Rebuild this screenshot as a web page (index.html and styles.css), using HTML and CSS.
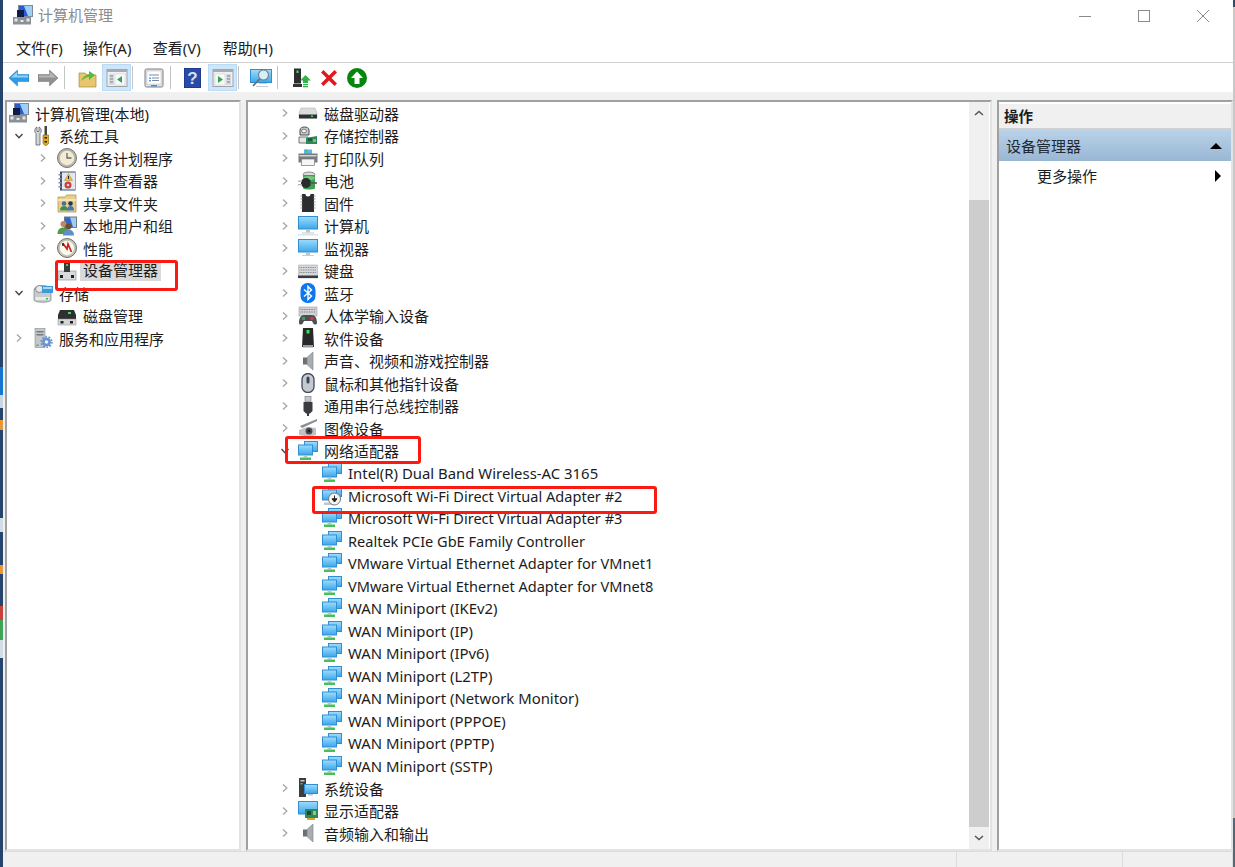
FILE: index.html
```html
<!DOCTYPE html>
<html lang="zh-CN">
<head>
<meta charset="utf-8">
<title>计算机管理</title>
<link rel="stylesheet" href="styles.css">
</head>
<body>
<svg class="defs" width="0" height="0" aria-hidden="true">
  <defs>
    <linearGradient id="scr" x1="0" y1="0" x2="0" y2="1"><stop offset="0" stop-color="#9adafc"/><stop offset="1" stop-color="#3fa9ea"/></linearGradient>
    <symbol id="chev-r" viewBox="0 0 10 10"><path d="M3 1.5 6.8 5 3 8.5" fill="none" stroke="#a6a6a6" stroke-width="1.3"/></symbol>
    <symbol id="chev-d" viewBox="0 0 10 10"><path d="M1.5 3 5 6.8 8.5 3" fill="none" stroke="#404040" stroke-width="1.3"/></symbol>

    <symbol id="i-mgmt" viewBox="0 0 20 20"><rect x="0" y="12" width="18" height="7.500" fill="#8b9097"/><rect x="1.500" y="13.500" width="3" height="3" fill="#e8e8e8"/><rect x="7.500" y="15" width="3" height="2" fill="#e8e8e8"/><rect x="13.500" y="13.500" width="3" height="3" fill="#e8e8e8"/><rect x="5" y="0" width="15" height="12" fill="#7d8a9b"/><rect x="6" y="1" width="13" height="10" fill="#2b59d8"/><path d="M11 1h8v10h-4z" fill="#9ed0f5"/><rect x="4" y="5" width="7" height="7" fill="#111c44"/></symbol>
    <symbol id="i-tools" viewBox="0 0 20 20"><path d="M4 1C1.500 2 1 6 3 7.500V19h4V7.500C9 6 8.500 2 6 1v4.500H4z" fill="#d2d5d8" stroke="#5f6266" stroke-width=".8"/><rect x="11.500" y="0" width="2.500" height="9" fill="#444"/><path d="M10 9h5.500v8.500L12.800 20 10 17.500z" fill="#e7a81c" stroke="#7d5a08" stroke-width=".6"/><rect x="11.500" y="11" width="2.500" height="1.500" fill="#222"/><rect x="11.500" y="15" width="2.500" height="1.500" fill="#222"/></symbol>
    <symbol id="i-clock" viewBox="0 0 20 20"><circle cx="10" cy="10" r="9.500" fill="#b6b6ae" stroke="#777"/><circle cx="10" cy="10" r="7.200" fill="#f4ecd2"/><path d="M10 5v5h4.500" fill="none" stroke="#666" stroke-width="1.300"/></symbol>
    <symbol id="i-event" viewBox="0 0 20 20"><rect x="3" y="0.500" width="15.500" height="19" fill="#33547f"/><rect x="5" y="1.500" width="13" height="17" fill="#e4e8ee"/><rect x="1.500" y="3" width="3" height="1.500" fill="#889"/><rect x="1.500" y="7" width="3" height="1.500" fill="#889"/><rect x="1.500" y="11" width="3" height="1.500" fill="#889"/><rect x="1.500" y="15" width="3" height="1.500" fill="#889"/><path d="M11.500 2.500 15.500 9.500h-8z" fill="#f3c21c" stroke="#866" stroke-width=".4"/><rect x="11" y="5" width="1" height="3" fill="#222"/><circle cx="11" cy="14" r="3.500" fill="#c9403a"/><circle cx="11" cy="14" r="1.300" fill="#f2d0cc"/></symbol>
    <symbol id="i-share" viewBox="0 0 20 20"><path d="M1 4h7l1.500-2H19V19H1z" fill="#e9d08a" stroke="#b08d3c" stroke-width=".7"/><path d="M1 6h18v2H1z" fill="#f4e4b5"/><circle cx="7" cy="10.500" r="2.300" fill="#4c6a9c"/><path d="M3 17.500c0-3 1.500-4.500 4-4.500s4 1.500 4 4.500z" fill="#3f8b52"/><circle cx="13.500" cy="10.500" r="2.300" fill="#20355d"/><path d="M10 17.500c0-3 1-4.500 3.500-4.500s3.500 1.500 3.500 4.500z" fill="#4676b0"/></symbol>
    <symbol id="i-users" viewBox="0 0 20 20"><rect x="7" y="0.500" width="13" height="11.500" fill="#6d7b8d"/><path d="M8 1.500h11v9.500H8z" fill="#3566cc"/><path d="M13 1.500h6v9.500h-3z" fill="#9ecff1"/><circle cx="6.500" cy="8" r="3" fill="#b88a60"/><path d="M0.500 18c0-4 2-6.500 6-6.500S12 14 12 18z" fill="#4f9a4f"/><circle cx="11.500" cy="10.500" r="3" fill="#6f4d33"/><path d="M6 19.500c0-3.500 2-6 5.500-6s5.500 2.500 5.500 6z" fill="#5d8fca"/></symbol>
    <symbol id="i-perf" viewBox="0 0 20 20"><circle cx="10" cy="10" r="9.500" fill="#c5c2b6" stroke="#6f6f6a"/><circle cx="10" cy="10" r="7.200" fill="#fbf8ee"/><path d="M6 5.500 10 11l1-5 3.500 8" fill="none" stroke="#c8231c" stroke-width="1.700"/><path d="M6 5v3" stroke="#222" stroke-width="1.500"/></symbol>
    <symbol id="i-dev" viewBox="0 0 20 20"><rect x="1" y="10" width="18" height="9" fill="#d8dadc" stroke="#8a8d90" stroke-width=".6"/><rect x="3" y="14" width="3" height="3" fill="#222"/><rect x="14" y="14" width="3" height="3" fill="#222"/><rect x="7" y="1" width="6" height="10" fill="#37393c"/><rect x="9" y="3" width="2" height="2" fill="#46d34b"/></symbol>
    <symbol id="i-storage" viewBox="0 0 20 20"><path d="M1 7c0-6 17-6 17 0v10c0 3-17 3-17 0z" fill="#c7cbce" stroke="#7d8185" stroke-width=".7"/><ellipse cx="6.500" cy="6" rx="4" ry="3.500" fill="#e8e8e8" stroke="#6a6a6a" stroke-width=".7"/><rect x="9" y="3" width="11" height="7" fill="#3d9ad9"/><path d="M10 4h9v2h-9z" fill="#a4d8f7"/><rect x="2.500" y="14" width="14" height="3" fill="#eaeaea"/><rect x="13" y="15" width="2" height="1.500" fill="#39b54a"/></symbol>
    <symbol id="i-disk" viewBox="0 0 20 20"><path d="M3 4h14l2 5v4H1V9z" fill="#2e2f31"/><rect x="11" y="6" width="3" height="2" fill="#4dd55a"/><rect x="1" y="13" width="18" height="6" fill="#d3d5d7" stroke="#8a8d90" stroke-width=".5"/><rect x="3.500" y="15" width="3" height="2.500" fill="#222"/><rect x="13" y="15" width="3" height="2.500" fill="#222"/></symbol>
    <symbol id="i-svc" viewBox="0 0 20 20"><rect x="2" y="0.500" width="10" height="19" fill="#c4c8cc" stroke="#848a90" stroke-width=".6"/><rect x="3.500" y="3" width="7" height="1.500" fill="#74797e"/><rect x="3.500" y="6" width="7" height="1.500" fill="#74797e"/><rect x="3.500" y="16.500" width="2" height="1.500" fill="#39b54a"/><circle cx="13.500" cy="14" r="4.500" fill="#6b93cf"/><circle cx="13.500" cy="14" r="5.300" fill="none" stroke="#6b93cf" stroke-width="1.800" stroke-dasharray="1.700 1.600"/><circle cx="13.500" cy="14" r="1.800" fill="#eef3fa"/></symbol>
    <symbol id="i-hdd" viewBox="0 0 20 20"><path d="M3 5h14l2 5v5H1v-5z" fill="#dadcdd" stroke="#a7a9ab" stroke-width=".5"/><rect x="1" y="11.500" width="18" height="4" fill="#2f3133"/><rect x="13" y="12.500" width="2" height="1.500" fill="#4dd55a"/></symbol>
    <symbol id="i-stor" viewBox="0 0 20 20"><path d="M2 4c0-4 9-4 9 0v5H2z" fill="#c7cbce" stroke="#4a4d50"/><ellipse cx="6" cy="5" rx="2.500" ry="1.800" fill="#f3f3f3" stroke="#444" stroke-width=".6"/><path d="M1 11h9v6H1z" fill="#e6e6e6" stroke="#555" stroke-width=".8"/><path d="M8 12l11-2v8H8z" fill="#2a8a5b"/><rect x="10" y="12" width="4" height="3" fill="#1c5e3d"/><rect x="15" y="13" width="3" height="3" fill="#caa24b"/></symbol>
    <symbol id="i-print" viewBox="0 0 20 20"><rect x="6" y="1.500" width="8" height="5" fill="#5fb7ee"/><rect x="7" y="1.500" width="2" height="3" fill="#4cc45a"/><path d="M0.500 5.500h19v9h-3v-3h-13v3h-3z" fill="#777c80"/><path d="M1.500 7h17v1.500h-17z" fill="#d2d5d7"/><rect x="3.500" y="11" width="13" height="6.500" fill="#f6f6f6" stroke="#777" stroke-width=".7"/></symbol>
    <symbol id="i-batt" viewBox="0 0 20 20"><ellipse cx="11" cy="3.500" rx="6" ry="2.500" fill="#d8dcdc" stroke="#666" stroke-width=".7"/><path d="M5 4h12v13c0 2-12 2-12 0z" fill="#3aa24c"/><ellipse cx="11" cy="7" rx="6" ry="2" fill="#77c885"/><circle cx="8" cy="12" r="5" fill="#2a2c2e"/><rect x="0" y="9.500" width="4" height="1.300" fill="#b4b4b4"/><rect x="0" y="13" width="4" height="1.300" fill="#b4b4b4"/><path d="M12 12h7" stroke="#555" stroke-width="1.600"/></symbol>
    <symbol id="i-chip" viewBox="0 0 20 20"><path d="M4 1h3.500a2.500 2.500 0 0 0 5 0H16v18H4z" fill="#2c2d2f"/><path d="M2.500 3h2M2.500 6h2M2.500 9h2M2.500 12h2M2.500 15h2M15.500 3h2M15.500 6h2M15.500 9h2M15.500 12h2M15.500 15h2" stroke="#9a9a9a" stroke-width="1.100"/></symbol>
    <symbol id="i-computer" viewBox="0 0 20 20"><rect y="0" width="20" height="13.500" fill="#2f8fd6"/><rect x="1" y="1" width="18" height="11.500" fill="url(#scr)"/><rect x="8" y="14" width="4" height="2.500" fill="#bcc6cc"/><rect x="4" y="16.500" width="12" height="1" fill="#c5ced4"/><rect y="18" width="20" height="1.500" fill="#dde3e6"/></symbol>
    <symbol id="i-monitor" viewBox="0 0 20 20"><rect y="1" width="20" height="13.500" fill="#2f8fd6"/><rect x="1" y="2" width="18" height="11.500" fill="url(#scr)"/><rect x="8" y="15" width="4" height="2" fill="#bcc6cc"/><rect x="4" y="17" width="12" height="1" fill="#c5ced4"/></symbol>
    <symbol id="i-kbd" viewBox="0 0 20 20"><rect y="4" width="20" height="13" rx="1" fill="#d6d8da" stroke="#9b9ea1" stroke-width=".5"/><path d="M1.500 6.500h17M1.500 9h17M1.500 11.500h17" stroke="#85898d" stroke-dasharray="1 .7"/><rect y="14.500" width="20" height="2.500" fill="#393b3e"/></symbol>
    <symbol id="i-bt" viewBox="0 0 20 20"><rect x="2.500" y="0" width="15" height="20" rx="7" fill="#0a78f0"/><path d="M6 6.500 13.500 13 10 16.500V3.500L13.500 7 6 13.500" fill="none" stroke="#fff" stroke-width="1.400"/></symbol>
    <symbol id="i-hid" viewBox="0 0 20 20"><rect x="1" y="1" width="18" height="9" fill="#d0d2d4" stroke="#8e9194" stroke-width=".5"/><path d="M2.500 3.500h15M2.500 6h15" stroke="#7f8387" stroke-dasharray="1 .7"/><path d="M1 17c0-5 2-8 5-8h8c3 0 5 3 5 8 0 2-3 2-4 0l-1-2H6l-1 2c-1 2-4 2-4 0z" fill="#4c5056"/><rect x="4" y="11" width="3" height="3" fill="#3aa24c"/><circle cx="14" cy="12.500" r="1.700" fill="#d33f36"/></symbol>
    <symbol id="i-soft" viewBox="0 0 20 20"><path d="M5 0h10l1 19H4z" fill="#27292b"/><rect x="8.500" y="2" width="3" height="3.500" fill="#3fe04f"/><rect x="5" y="17" width="10" height="2.500" fill="#9a9c9e"/></symbol>
    <symbol id="i-sound" viewBox="0 0 20 20"><rect x="5" y="6.500" width="4" height="7" fill="#6b6f73"/><path d="M9 6.500 15 1v18l-6-5.500z" fill="#a8adb1" stroke="#7b7f83" stroke-width=".6"/></symbol>
    <symbol id="i-mouse" viewBox="0 0 20 20"><rect x="4" y="0.500" width="12" height="19" rx="6" fill="#c3cad2" stroke="#3f4c5c" stroke-width="1.300"/><rect x="8.500" y="3.500" width="3" height="7" rx="1.500" fill="#3c4652"/></symbol>
    <symbol id="i-usb" viewBox="0 0 20 20"><rect x="7" y="0.500" width="6" height="5" fill="#c4c6c8" stroke="#737679" stroke-width=".6"/><path d="M5.500 6h9v9l-2.500 2.500h-4L5.500 15z" fill="#3a3c3f"/><rect x="9" y="17" width="2" height="3" fill="#3a3c3f"/></symbol>
    <symbol id="i-cam" viewBox="0 0 20 20"><path d="M2 8 19 1v2L4 10z" fill="#8a8d90"/><path d="M1 12l8-3 9 1v7l-7 2-10-2z" fill="#c0c3c6"/><circle cx="11" cy="13" r="3.500" fill="#4c5056"/><circle cx="11" cy="13" r="1.500" fill="#1e2022"/></symbol>
    <symbol id="i-net" viewBox="0 0 20 20"><rect x="6" y="0" width="14" height="11" fill="#2f8fd6"/><rect x="7" y="1" width="12" height="9" fill="url(#scr)"/><rect x="0" y="3.500" width="15" height="11" fill="#2f8fd6"/><rect x="1" y="4.500" width="13" height="9" fill="url(#scr)"/><rect x="5.500" y="14.500" width="4" height="2" fill="#bcc6cc"/><path d="M2 16.500h11v2.500H2z" fill="#47c05a"/></symbol>
    <symbol id="i-netdl" viewBox="0 0 20 20"><rect x="6" y="0" width="14" height="11" fill="#2f8fd6"/><rect x="7" y="1" width="12" height="9" fill="url(#scr)"/><rect x="0" y="3.500" width="15" height="11" fill="#2f8fd6"/><rect x="1" y="4.500" width="13" height="9" fill="url(#scr)"/><path d="M2 16.500h11v2.500H2z" fill="#bcc6cc"/><circle cx="12.500" cy="13" r="6" fill="#f5f5f5" stroke="#777"/><path d="M12.500 9.500v4M10 12.800h5L12.500 16z" fill="#222" stroke="#222"/></symbol>
    <symbol id="i-sys" viewBox="0 0 20 20"><rect x="1" y="0" width="7" height="19" fill="#3b3d40"/><rect x="2.500" y="2" width="4" height="1.500" fill="#c9cccf"/><rect x="2.500" y="5" width="2" height="1.500" fill="#45d056"/><rect x="6" y="6" width="14" height="10" fill="#2f8fd6"/><rect x="7" y="7" width="12" height="8" fill="url(#scr)"/><rect x="10" y="16" width="5" height="1.500" fill="#bcc6cc"/></symbol>
    <symbol id="i-disp" viewBox="0 0 20 20"><rect y="0" width="20" height="13.500" fill="#2f8fd6"/><rect x="1" y="1" width="18" height="11.500" fill="url(#scr)"/><rect x="7" y="8" width="13" height="9" fill="#2b8a57"/><rect x="9" y="10" width="4" height="4" fill="#1b4b33"/><rect x="15" y="10" width="3" height="4" fill="#8dc78b"/><rect x="9" y="17" width="8" height="2" fill="#d9a52e"/></symbol>

    <symbol id="t-back" viewBox="0 0 20 18"><path d="M0 9 8.500 1v4.500H20v7H8.500V17z" fill="#2f9be6" stroke="#1f78bd" stroke-width=".5"/><path d="M2 8.500 8 3v3.500h11v2z" fill="#92d3f8"/></symbol>
    <symbol id="t-fwd" viewBox="0 0 20 18"><path d="M20 9 11.500 1v4.500H0v7h11.500V17z" fill="#8f9194" stroke="#707275" stroke-width=".5"/><path d="M1 6.500h11V3l6 5.500H1z" fill="#b4b6b8"/></symbol>
    <symbol id="t-up" viewBox="0 0 20 20"><path d="M1 5h6l2 2h9v12H1z" fill="#e7c66f" stroke="#a98a3b" stroke-width=".7"/><path d="M3 13c2-4 4-6 8-7V3l6 4-6 5V9c-3 0-5 2-8 4z" fill="#5cb73e"/></symbol>
    <symbol id="t-tree" viewBox="0 0 22 20"><rect x="1" y="1.500" width="20" height="17" fill="#eef0f2" stroke="#9ea3a9" stroke-width="1"/><rect x="1" y="1.500" width="20" height="2.500" fill="#a7acb2"/><rect x="3" y="6" width="5" height="11" fill="#d6dade"/><path d="M4 8h3M4 11h3M4 14h3" stroke="#6f8096"/><rect x="9" y="6" width="10" height="11" fill="#f9fafb" stroke="#c6cace" stroke-width=".5"/><path d="M16 8v7l-5-3.500z" fill="#3aa24c"/></symbol>
    <symbol id="t-act" viewBox="0 0 22 20"><rect x="1" y="1.500" width="20" height="17" fill="#eef0f2" stroke="#9ea3a9" stroke-width="1"/><rect x="1" y="1.500" width="20" height="2.500" fill="#a7acb2"/><rect x="14" y="6" width="5" height="11" fill="#d6dade"/><path d="M15 8h3M15 11h3M15 14h3" stroke="#6f8096"/><rect x="3" y="6" width="10" height="11" fill="#f9fafb" stroke="#c6cace" stroke-width=".5"/><path d="M6 8v7l5-3.500z" fill="#3aa24c"/></symbol>
    <symbol id="t-prop" viewBox="0 0 20 20"><rect x="1" y="1" width="18" height="18" rx="1.500" fill="#dfe1e3" stroke="#7c8087"/><rect x="3" y="3" width="14" height="13" fill="#fff" stroke="#b8bcc0" stroke-width=".5"/><path d="M5 7h10M8 10h7M8 12.500h7" stroke="#7a8a9f"/><rect x="5" y="9.500" width="2" height="1.500" fill="#5b9bd5"/><rect x="5" y="12" width="2" height="1.500" fill="#5b9bd5"/><rect x="7" y="17" width="6" height="1.500" fill="#2f9be6"/></symbol>
    <symbol id="t-help" viewBox="0 0 17 20"><rect width="17" height="20" fill="#2a4aa8" stroke="#122a72" stroke-width=".8"/><text x="8.500" y="16" text-anchor="middle" font-family="Liberation Sans" font-weight="700" font-size="17" fill="#d9def2">?</text></symbol>
    <symbol id="t-mag" viewBox="0 0 22 20"><rect x="0" y="1" width="22" height="14" fill="#2f8fd6"/><rect x="1" y="2" width="20" height="12" fill="url(#scr)"/><circle cx="13.500" cy="7" r="5" fill="#d7eefb" stroke="#767b80" stroke-width="1.100"/><path d="M9.500 11 3 18" stroke="#6d7175" stroke-width="1.800"/><path d="M9 15h8v1H9zM6 18h12v1H6z" fill="#c5ced4"/></symbol>
    <symbol id="t-dev" viewBox="0 0 18 20"><rect x="1" y="0.500" width="7" height="15" fill="#2b2d2f"/><rect x="3.500" y="2.500" width="2" height="2.500" fill="#4be05a"/><rect x="0" y="16" width="9" height="3" fill="#333"/><path d="M12.500 7 18 12.500h-3V15h-5v-2.500H7z" fill="#34b24a"/><rect x="10" y="16" width="5" height="1.300" fill="#34b24a"/><rect x="10" y="18" width="5" height="1.300" fill="#34b24a"/></symbol>
    <symbol id="t-x" viewBox="0 0 18 18"><path d="M1 3.500 3.500 1 9 6.500 14.500 1 17 3.500 11.500 9 17 14.500 14.500 17 9 11.500 3.500 17 1 14.500 6.500 9z" fill="#e3181c"/></symbol>
    <symbol id="t-go" viewBox="0 0 20 20"><circle cx="10" cy="10" r="10" fill="#07860f"/><path d="M10 3.500 16 10h-3.500v6h-5v-6H4z" fill="#fff"/></symbol>
  </defs>
</svg>

<div class="desktop-edge"></div>
<div class="window">
  <header class="titlebar">
    <svg class="title-icon"><use href="#i-mgmt"/></svg>
    <span class="title-text">计算机管理</span>
    <div class="win-controls">
      <span class="ctl-min"></span>
      <span class="ctl-max"></span>
      <svg class="ctl-close" viewBox="0 0 12 12"><path d="M0 0 12 12M12 0 0 12" stroke="#8a8a8a" stroke-width="1" fill="none"/></svg>
    </div>
  </header>
  <nav class="menubar">
    <span>文件(F)</span><span>操作(A)</span><span>查看(V)</span><span>帮助(H)</span>
  </nav>
  <div class="toolbar">
    <svg class="tb tb-back"><use href="#t-back"/></svg>
    <svg class="tb tb-fwd"><use href="#t-fwd"/></svg>
    <i class="sep sep-a"></i>
    <svg class="tb tb-up"><use href="#t-up"/></svg>
    <span class="pressed pressed-a"><svg class="tb tb-panel"><use href="#t-tree"/></svg></span>
    <i class="sep sep-b"></i>
    <svg class="tb tb-prop"><use href="#t-prop"/></svg>
    <i class="sep sep-c"></i>
    <svg class="tb tb-help"><use href="#t-help"/></svg>
    <span class="pressed pressed-b"><svg class="tb tb-panel"><use href="#t-act"/></svg></span>
    <i class="sep sep-d"></i>
    <svg class="tb tb-mag"><use href="#t-mag"/></svg>
    <i class="sep sep-e"></i>
    <svg class="tb tb-dev"><use href="#t-dev"/></svg>
    <svg class="tb tb-x"><use href="#t-x"/></svg>
    <svg class="tb tb-go"><use href="#t-go"/></svg>
  </div>

  <main class="panes">
    <section class="pane pane-left">
      <ul class="tree">
        <li class="row root"><svg class="ico"><use href="#i-mgmt"/></svg><span>计算机管理(本地)</span></li>
        <li class="row l1"><svg class="chev"><use href="#chev-d"/></svg><svg class="ico"><use href="#i-tools"/></svg><span>系统工具</span></li>
        <li class="row l2"><svg class="chev"><use href="#chev-r"/></svg><svg class="ico"><use href="#i-clock"/></svg><span>任务计划程序</span></li>
        <li class="row l2"><svg class="chev"><use href="#chev-r"/></svg><svg class="ico"><use href="#i-event"/></svg><span>事件查看器</span></li>
        <li class="row l2"><svg class="chev"><use href="#chev-r"/></svg><svg class="ico"><use href="#i-share"/></svg><span>共享文件夹</span></li>
        <li class="row l2"><svg class="chev"><use href="#chev-r"/></svg><svg class="ico"><use href="#i-users"/></svg><span>本地用户和组</span></li>
        <li class="row l2"><svg class="chev"><use href="#chev-r"/></svg><svg class="ico"><use href="#i-perf"/></svg><span>性能</span></li>
        <li class="row l2"><i class="chev"></i><svg class="ico"><use href="#i-dev"/></svg><span class="selected">设备管理器</span></li>
        <li class="row l1"><svg class="chev"><use href="#chev-d"/></svg><svg class="ico"><use href="#i-storage"/></svg><span>存储</span></li>
        <li class="row l2"><i class="chev"></i><svg class="ico"><use href="#i-disk"/></svg><span>磁盘管理</span></li>
        <li class="row l1"><svg class="chev"><use href="#chev-r"/></svg><svg class="ico"><use href="#i-svc"/></svg><span>服务和应用程序</span></li>
      </ul>
    </section>

    <section class="pane pane-mid">
      <ul class="tree tree-mid">
        <li class="row m1"><svg class="chev"><use href="#chev-r"/></svg><svg class="ico"><use href="#i-hdd"/></svg><span>磁盘驱动器</span></li>
        <li class="row m1"><svg class="chev"><use href="#chev-r"/></svg><svg class="ico"><use href="#i-stor"/></svg><span>存储控制器</span></li>
        <li class="row m1"><svg class="chev"><use href="#chev-r"/></svg><svg class="ico"><use href="#i-print"/></svg><span>打印队列</span></li>
        <li class="row m1"><svg class="chev"><use href="#chev-r"/></svg><svg class="ico"><use href="#i-batt"/></svg><span>电池</span></li>
        <li class="row m1"><svg class="chev"><use href="#chev-r"/></svg><svg class="ico"><use href="#i-chip"/></svg><span>固件</span></li>
        <li class="row m1"><svg class="chev"><use href="#chev-r"/></svg><svg class="ico"><use href="#i-computer"/></svg><span>计算机</span></li>
        <li class="row m1"><svg class="chev"><use href="#chev-r"/></svg><svg class="ico"><use href="#i-monitor"/></svg><span>监视器</span></li>
        <li class="row m1"><svg class="chev"><use href="#chev-r"/></svg><svg class="ico"><use href="#i-kbd"/></svg><span>键盘</span></li>
        <li class="row m1"><svg class="chev"><use href="#chev-r"/></svg><svg class="ico"><use href="#i-bt"/></svg><span>蓝牙</span></li>
        <li class="row m1"><svg class="chev"><use href="#chev-r"/></svg><svg class="ico"><use href="#i-hid"/></svg><span>人体学输入设备</span></li>
        <li class="row m1"><svg class="chev"><use href="#chev-r"/></svg><svg class="ico"><use href="#i-soft"/></svg><span>软件设备</span></li>
        <li class="row m1"><svg class="chev"><use href="#chev-r"/></svg><svg class="ico"><use href="#i-sound"/></svg><span>声音、视频和游戏控制器</span></li>
        <li class="row m1"><svg class="chev"><use href="#chev-r"/></svg><svg class="ico"><use href="#i-mouse"/></svg><span>鼠标和其他指针设备</span></li>
        <li class="row m1"><svg class="chev"><use href="#chev-r"/></svg><svg class="ico"><use href="#i-usb"/></svg><span>通用串行总线控制器</span></li>
        <li class="row m1"><svg class="chev"><use href="#chev-r"/></svg><svg class="ico"><use href="#i-cam"/></svg><span>图像设备</span></li>
        <li class="row m1"><svg class="chev"><use href="#chev-d"/></svg><svg class="ico"><use href="#i-net"/></svg><span>网络适配器</span></li>
        <li class="row m2 wide"><svg class="ico"><use href="#i-net"/></svg><span>Intel(R) Dual Band Wireless-AC 3165</span></li>
        <li class="row m2"><svg class="ico"><use href="#i-netdl"/></svg><span>Microsoft Wi-Fi Direct Virtual Adapter #2</span></li>
        <li class="row m2"><svg class="ico"><use href="#i-net"/></svg><span>Microsoft Wi-Fi Direct Virtual Adapter #3</span></li>
        <li class="row m2"><svg class="ico"><use href="#i-net"/></svg><span>Realtek PCIe GbE Family Controller</span></li>
        <li class="row m2"><svg class="ico"><use href="#i-net"/></svg><span>VMware Virtual Ethernet Adapter for VMnet1</span></li>
        <li class="row m2"><svg class="ico"><use href="#i-net"/></svg><span>VMware Virtual Ethernet Adapter for VMnet8</span></li>
        <li class="row m2 wide"><svg class="ico"><use href="#i-net"/></svg><span>WAN Miniport (IKEv2)</span></li>
        <li class="row m2 wide"><svg class="ico"><use href="#i-net"/></svg><span>WAN Miniport (IP)</span></li>
        <li class="row m2 wide"><svg class="ico"><use href="#i-net"/></svg><span>WAN Miniport (IPv6)</span></li>
        <li class="row m2 wide"><svg class="ico"><use href="#i-net"/></svg><span>WAN Miniport (L2TP)</span></li>
        <li class="row m2 wide"><svg class="ico"><use href="#i-net"/></svg><span>WAN Miniport (Network Monitor)</span></li>
        <li class="row m2 wide"><svg class="ico"><use href="#i-net"/></svg><span>WAN Miniport (PPPOE)</span></li>
        <li class="row m2 wide"><svg class="ico"><use href="#i-net"/></svg><span>WAN Miniport (PPTP)</span></li>
        <li class="row m2 wide"><svg class="ico"><use href="#i-net"/></svg><span>WAN Miniport (SSTP)</span></li>
        <li class="row m1"><svg class="chev"><use href="#chev-r"/></svg><svg class="ico"><use href="#i-sys"/></svg><span>系统设备</span></li>
        <li class="row m1"><svg class="chev"><use href="#chev-r"/></svg><svg class="ico"><use href="#i-disp"/></svg><span>显示适配器</span></li>
        <li class="row m1"><svg class="chev"><use href="#chev-r"/></svg><svg class="ico"><use href="#i-sound"/></svg><span>音频输入和输出</span></li>
      </ul>
      <div class="scrollbar">
        <div class="sb-btn"><svg viewBox="0 0 10 6"><path d="M1 5 5 1.500 9 5" fill="none" stroke="#555" stroke-width="1.500"/></svg></div>
        <div class="sb-track"><div class="sb-thumb"></div></div>
        <div class="sb-btn"><svg viewBox="0 0 10 6"><path d="M1 1 5 4.500 9 1" fill="none" stroke="#555" stroke-width="1.500"/></svg></div>
      </div>
    </section>

    <section class="pane pane-right">
      <h2 class="act-title">操作</h2>
      <div class="act-group"><span>设备管理器</span><i class="tri-up"></i></div>
      <div class="act-item"><span>更多操作</span><i class="tri-right"></i></div>
    </section>
  </main>

  <footer class="statusbar">
    <div class="st st-a"></div><div class="st st-b"></div><div class="st st-c"></div>
  </footer>
</div>
<div class="desktop-edge edge-right"></div>

<div class="mark mark-dev"></div>
<div class="mark mark-net"></div>
<div class="mark mark-adapter"></div>
</body>
</html>
```

FILE: styles.css
```css
* { box-sizing: border-box; }
html, body { height: 100%; }
body {
  margin: 0;
  height: 867px;
  overflow: hidden;
  display: flex;
  position: relative;
  background: #fff;
  color: #1c1c1c;
  font-family: "Noto Sans", "Noto Sans CJK SC", sans-serif;
  font-size: 15px;
}
.defs { position: absolute; }
ul { list-style: none; margin: 0; padding: 0; }

.desktop-edge {
  width: 3px;
  flex: none;
  background: linear-gradient(180deg,
    #26456e 0, #26456e 367px, #1577cf 367px, #1577cf 395px, #c9d6e2 395px, #c9d6e2 408px,
    #26456e 408px, #26456e 420px, #e8973a 420px, #e8973a 430px, #26456e 430px, #26456e 518px,
    #d2dde6 518px, #d2dde6 532px, #26456e 532px, #26456e 565px, #e8973a 565px, #e8973a 574px,
    #26456e 574px, #26456e 606px, #c8423a 606px, #c8423a 620px, #3fa457 620px, #3fa457 640px,
    #d2dde6 640px, #d2dde6 658px, #26456e 658px, #26456e 100%);
}
.edge-right { width: 2px; background: linear-gradient(180deg, #2b4a74 0, #2b4a74 7px, #c8c8c8 7px, #c8c8c8 818px, #51697f 818px, #51697f 100%); }

.window { flex: 1; min-width: 0; display: flex; flex-direction: column; background: #fff; }

.titlebar { height: 31px; flex: none; display: flex; align-items: center; padding: 0 0 2px 10px; }
.title-icon { width: 20px; height: 20px; margin-right: 5px; }
.title-text { color: #8c8c8c; font-size: 15px; }
.win-controls { margin-left: auto; display: flex; align-items: center; padding-top: 3px; }
.ctl-min { width: 12px; height: 1px; background: #8a8a8a; margin-right: 47px; }
.ctl-max { width: 12px; height: 12px; border: 1px solid #8a8a8a; margin-right: 47px; }
.ctl-close { width: 12px; height: 12px; margin-right: 24px; }

.menubar {
  height: 32px;
  flex: none;
  display: flex;
  align-items: center;
  gap: 20px;
  padding: 2px 0 0 13px;
  border-bottom: 1px solid #d2d2d2;
  font-size: 15px;
}
.menubar span + span { min-width: 50px; }

.toolbar {
  height: 29px;
  flex: none;
  display: flex;
  align-items: center;
  background: #fff;
}
.tb { display: block; }
.tb-back { width: 20px; height: 18px; margin-left: 6px; }
.tb-fwd { width: 20px; height: 18px; margin-left: 9px; }
.sep { width: 1px; height: 23px; background: #c4c4c4; display: block; }
.sep-a { margin-left: 6px; }
.tb-up { width: 20px; height: 20px; margin-left: 13px; }
.pressed { width: 29px; height: 27px; margin-left: 4px; background: #cfe6fa; border: 1px solid #b9dbf6; display: flex; align-items: center; justify-content: center; }
.tb-panel { width: 22px; height: 20px; }
.sep-b { margin-left: 1px; }
.tb-prop { width: 20px; height: 20px; margin-left: 11px; }
.sep-c { margin-left: 6px; }
.tb-help { width: 17px; height: 20px; margin-left: 13px; }
.pressed-b { margin-left: 7px; }
.sep-d { margin-left: 1px; }
.tb-mag { width: 22px; height: 20px; margin-left: 11px; }
.sep-e { margin-left: 5px; }
.tb-dev { width: 18px; height: 20px; margin-left: 15px; }
.tb-x { width: 18px; height: 18px; margin-left: 9px; }
.tb-go { width: 20px; height: 20px; margin-left: 9px; }

.panes {
  flex: 1;
  min-height: 0;
  display: flex;
  background: #f0f0f0;
  padding: 8px 0 0 2px;
}
.pane { background: #fff; border: 2px solid #a0a0a0; border-right-color: #e3e3e3; border-bottom-color: #e3e3e3; }
.pane-left { width: 236px; flex: none; overflow: hidden; }
.pane-mid { width: 746px; flex: none; margin-left: 5px; display: flex; overflow: hidden; }
.pane-right { flex: 1; margin-left: 5px; }

.tree { white-space: nowrap; }
.tree-mid { flex: 1; min-width: 0; }
.row { height: 22.5px; display: flex; align-items: center; }
.chev { width: 10px; height: 10px; flex: none; display: block; }
.ico { width: 20px; height: 20px; flex: none; display: block; }
.row span { margin-left: 6px; }
.root { padding-left: 2px; }
.l1 { padding-left: 7px; }
.l1 .chev { margin-right: 9px; }
.l2 { padding-left: 31px; }
.l2 .chev { margin-right: 9px; }
.m1 { padding-left: 32px; }
.m1 .chev { margin-right: 8px; }
.m2 { padding-left: 74px; }
.m2 span { font-size: 14.55px; }
.m2.wide span { font-size: 14.9px; }
.selected { background: #d9d9d9; padding: 0 3px; margin-left: 3px !important; line-height: 21px; }

.scrollbar { width: 20px; flex: none; margin-right: 1px; background: #f0f0f0; display: flex; flex-direction: column; }
.sb-btn { height: 22px; flex: none; display: flex; align-items: center; justify-content: center; }
.sb-btn svg { width: 10px; height: 6px; }
.sb-track { flex: 1; padding-top: 76px; display: flex; }
.sb-thumb { flex: 1; background: #cdcdcd; }

.act-title { margin: 2px 0 0; height: 26px; background: #f0f0f0; border-bottom: 2px solid #d0d0d0; font-size: 14.5px; font-weight: 700; padding-left: 5px; line-height: 24px; }
.act-group {
  height: 31px;
  display: flex;
  align-items: center;
  justify-content: space-between;
  padding: 0 9px 0 7px;
  background: linear-gradient(180deg, #b9d2e9 0, #99b6d3 100%);
  color: #1f2a36;
}
.tri-up { width: 0; height: 0; border-left: 6px solid transparent; border-right: 6px solid transparent; border-bottom: 6px solid #000; }
.act-item { height: 29px; display: flex; align-items: center; justify-content: space-between; padding: 0 10px 0 38px; }
.tri-right { width: 0; height: 0; border-top: 6px solid transparent; border-bottom: 6px solid transparent; border-left: 6px solid #000; }

.statusbar { height: 16px; flex: none; display: flex; background: #f0f0f0; border-top: 1px solid #dcdcdc; }
.st { height: 100%; border-right: 1px solid #dcdcdc; }
.st-a { width: 954px; }
.st-b { width: 166px; }
.st-c { flex: 1; }

.mark { position: absolute; border: 3px solid #fb1a12; border-radius: 3px; pointer-events: none; }
.mark-dev { left: 55px; top: 260px; width: 123px; height: 31px; }
.mark-net { left: 285px; top: 436px; width: 136px; height: 28px; }
.mark-adapter { left: 312px; top: 486px; width: 345px; height: 28px; }
```
